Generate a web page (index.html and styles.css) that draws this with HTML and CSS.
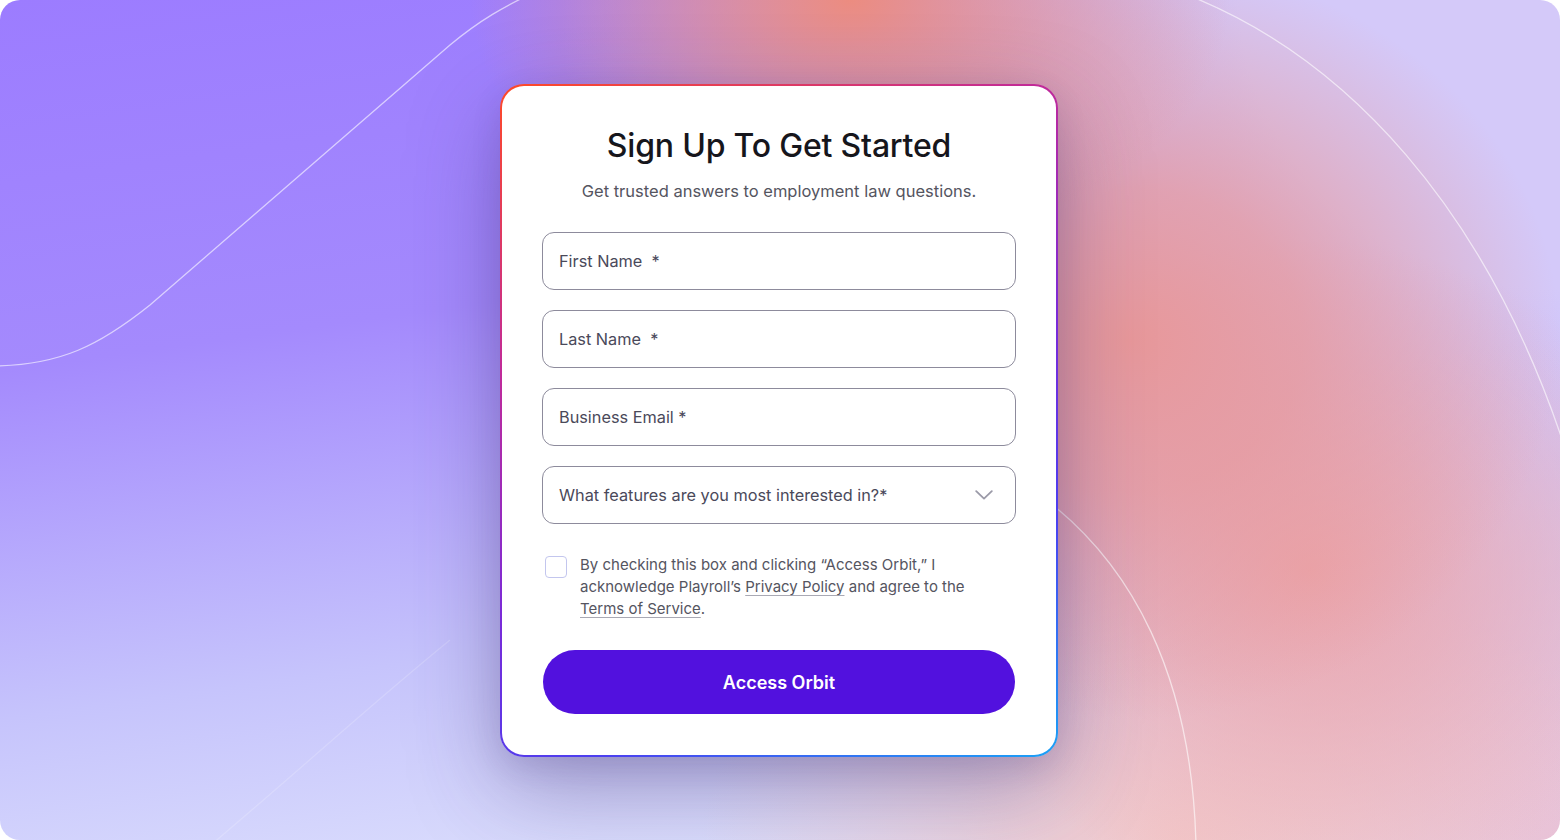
FILE: index.html
```html
<!DOCTYPE html>
<html lang="en">
<head>
<meta charset="utf-8">
<title>Sign Up To Get Started</title>
<link rel="stylesheet" href="styles.css">
</head>
<body>
<main class="stage">
  <svg class="deco" viewBox="0 0 1560 840" preserveAspectRatio="none" aria-hidden="true">
    <path class="line" d="M-10 366 C 60 366 100 345 150 305 L 450 45 C 480 20 505 6 535 -8"/>
    <path class="line" d="M1195 -2 C 1345 60 1485 205 1565 448"/>
    <path class="line" d="M1030 488 C 1135 560 1192 680 1196 845"/>
    <path class="line faint" d="M450 640 C 370 705 300 770 205 850"/>
  </svg>

  <section class="card">
    <h1 class="title">Sign Up To Get Started</h1>
    <p class="subtitle">Get trusted answers to employment law questions.</p>

    <form class="form">
      <div class="fields">
        <label class="field"><span class="label">First Name&nbsp; *</span></label>
        <label class="field"><span class="label">Last Name&nbsp; *</span></label>
        <label class="field"><span class="label">Business Email *</span></label>
        <label class="field select">
          <span class="label">What features are you most interested in?*</span>
          <svg class="chevron" width="18" height="10" viewBox="0 0 18 10" aria-hidden="true">
            <polyline points="1.2,1.2 9,8.6 16.8,1.2"/>
          </svg>
        </label>
      </div>

      <div class="consent">
        <span class="box"></span>
        <p class="consent-text">By checking this box and clicking “Access Orbit,” I<br>acknowledge Playroll’s <a href="#">Privacy Policy</a> and agree to the<br><a href="#">Terms of Service</a>.</p>
      </div>

      <button type="button" class="submit">Access Orbit</button>
    </form>
  </section>
</main>
</body>
</html>
```

FILE: styles.css
```css
* { box-sizing: border-box; }

html, body {
  margin: 0;
  padding: 0;
  background: #ffffff;
}

body {
  font-family: "Inter", "Noto Sans", "Liberation Sans", sans-serif;
  width: 1560px;
  height: 840px;
  overflow: hidden;
}

.stage {
  position: relative;
  width: 1560px;
  height: 840px;
  border-radius: 20px;
  overflow: hidden;
  display: flex;
  justify-content: center;
  align-items: flex-start;
  padding-top: 84px;
  background:
    radial-gradient(ellipse 380px 250px at 850px 0px, rgba(236, 140, 128, 1) 0%, rgba(236, 140, 128, 0.55) 45%, rgba(236, 140, 128, 0) 100%),
    radial-gradient(ellipse 430px 380px at 1130px 340px, rgba(232, 152, 154, 1) 0%, rgba(232, 152, 154, 0.75) 40%, rgba(232, 152, 154, 0) 100%),
    radial-gradient(ellipse 380px 330px at 1310px 570px, rgba(236, 164, 168, 0.95) 0%, rgba(236, 164, 168, 0.6) 40%, rgba(236, 164, 168, 0) 100%),
    radial-gradient(ellipse 480px 280px at 1180px 840px, rgba(242, 200, 202, 1) 0%, rgba(242, 200, 202, 0) 100%),
    radial-gradient(ellipse 600px 500px at 1560px 840px, rgba(230, 192, 218, 1) 0%, rgba(230, 192, 218, 0) 100%),
    radial-gradient(ellipse 1000px 900px at 1560px 0px, rgba(212, 201, 249, 1) 0%, rgba(212, 201, 249, 1) 32%, rgba(212, 201, 249, 0) 100%),
    linear-gradient(172deg, #9c7cff 0%, #a48afd 35%, #c6c4fc 68%, #e6ebfd 100%);
}

.deco {
  position: absolute;
  inset: 0;
  width: 100%;
  height: 100%;
  pointer-events: none;
}

.line {
  fill: none;
  stroke: rgba(255, 255, 255, 0.6);
  stroke-width: 1.3;
}

.line.faint {
  stroke: rgba(255, 255, 255, 0.18);
}

.card {
  position: relative;
  width: 558px;
  margin-right: 2px;
  padding: 39px 40px 41px;
  border: 2px solid transparent;
  border-radius: 24px;
  background:
    linear-gradient(#ffffff, #ffffff) padding-box,
    linear-gradient(152deg, #ff4a26 0%, #c02a9a 30%, #7a2ad8 55%, #4b3ff0 75%, #1aa2f6 100%) border-box;
  box-shadow: 0 30px 90px rgba(60, 45, 110, 0.38), 0 10px 30px rgba(60, 45, 110, 0.12);
}

.title {
  margin: 0;
  font-size: 32px;
  line-height: 42px;
  font-weight: 500;
  color: #16161c;
  text-align: center;
  letter-spacing: -0.2px;
}

.subtitle {
  margin: 12px 0 0;
  font-size: 16.5px;
  line-height: 24px;
  color: #55555f;
  text-align: center;
}

.form {
  margin-top: 29px;
}

.fields {
  display: flex;
  flex-direction: column;
  gap: 20px;
}

.field {
  height: 58px;
  border: 1px solid #8d8b9c;
  border-radius: 12px;
  display: flex;
  align-items: center;
  justify-content: space-between;
  padding: 0 22px 0 16px;
}

.label {
  font-size: 16.3px;
  color: #4a495a;
}

.chevron polyline {
  fill: none;
  stroke: #9b9aa8;
  stroke-width: 1.8;
  stroke-linecap: round;
  stroke-linejoin: round;
}

.consent {
  margin-top: 30px;
  display: flex;
  align-items: flex-start;
  gap: 13px;
  padding-left: 3px;
}

.box {
  flex: none;
  width: 22px;
  height: 22px;
  margin-top: 2px;
  border: 1.5px solid #c3c6ee;
  border-radius: 4px;
  background: #ffffff;
}

.consent-text {
  margin: 0;
  font-size: 15px;
  line-height: 22px;
  color: #55555f;
}

.consent-text a {
  color: #55555f;
  text-decoration: underline;
  text-decoration-color: #a9a9b4;
  text-underline-offset: 3px;
}

.submit {
  display: block;
  width: 472px;
  margin: 30px auto 0;
  height: 64px;
  border: 0;
  border-radius: 32px;
  background: #5211de;
  color: #ffffff;
  font-family: inherit;
  font-size: 18px;
  font-weight: 600;
  cursor: pointer;
}
```
